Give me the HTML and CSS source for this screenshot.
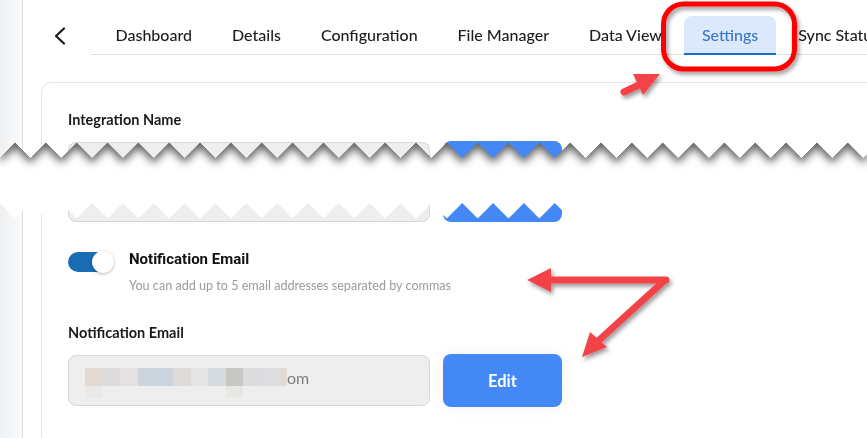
FILE: index.html
```html
<!DOCTYPE html>
<html lang="en">
<head>
<meta charset="utf-8">
<title>Settings</title>
<link rel="stylesheet" href="styles.css">
</head>
<body>
<div class="page">
  <div class="torn-top">
    <div class="piece piece-top">
      <aside class="side"></aside>
      <main class="main">
        <header class="header">
          <span class="back">
            <svg width="12" height="18" viewBox="0 0 12 18"><path d="M10 1.5 L2 9 L10 16.5" fill="none" stroke="#1a1a1a" stroke-width="2.2" stroke-linecap="round" stroke-linejoin="round"/></svg>
          </span>
          <nav class="tabs">
            <span class="tab">Dashboard</span>
            <span class="tab">Details</span>
            <span class="tab">Configuration</span>
            <span class="tab">File Manager</span>
            <span class="tab">Data View</span>
            <span class="tab active">Settings</span>
            <span class="tab">Sync Status</span>
          </nav>
        </header>
        <section class="card card-top">
          <div class="label">Integration Name</div>
          <div class="row">
            <div class="field field-top"></div>
            <div class="btn btn-top"></div>
          </div>
        </section>
      </main>
    </div>
  </div>

  <div class="piece piece-bottom">
    <aside class="side"></aside>
    <main class="main">
      <section class="card card-bottom">
        <div class="row row-tail">
          <div class="field field-tail"></div>
          <div class="btn btn-tail"></div>
        </div>
        <div class="switch-row">
          <span class="switch"></span>
          <div class="switch-text">
            <div class="switch-title">Notification Email</div>
            <div class="switch-sub">You can add up to 5 email addresses separated by commas</div>
          </div>
        </div>
        <div class="label label-email">Notification Email</div>
        <div class="row row-email">
          <div class="field email">
            <div class="mosaic">
              <i class="m1"></i><i class="m2"></i><i class="m3"></i><i class="m4"></i><i class="m5"></i><i class="m6"></i><i class="m7"></i><i class="m8"></i><i class="m9"></i><i class="m10"></i><i class="m11"></i>
              <i class="n1"></i><i class="gapA"></i><i class="n2"></i>
            </div>
            <span class="email-end">om</span>
          </div>
          <button class="btn edit">Edit</button>
        </div>
      </section>
    </main>
  </div>

  <svg class="annot" width="867" height="438" viewBox="0 0 867 438">
    <defs>
      <filter id="sh" x="-30%" y="-30%" width="160%" height="160%">
        <feDropShadow dx="2" dy="3" stdDeviation="2" flood-color="#000" flood-opacity="0.4"/>
      </filter>
    </defs>
    <g filter="url(#sh)">
      <rect x="663.5" y="4" width="131" height="65" rx="20" fill="none" stroke="#ff0000" stroke-width="5"/>
    </g>
    <g filter="url(#sh)" fill="#f4434a" stroke="#f4434a">
      <line x1="624" y1="92" x2="641" y2="84" stroke-width="7" stroke-linecap="round"/>
      <polygon points="660,74 633,74 643,95" stroke="none"/>
      <line x1="666" y1="280" x2="548" y2="280" stroke-width="7" stroke-linecap="round"/>
      <polygon points="527,280 551,268 551,292" stroke="none"/>
      <line x1="664" y1="281" x2="597" y2="342" stroke-width="7" stroke-linecap="round"/>
      <polygon points="582,357 590,332 607,347" stroke="none"/>
    </g>
  </svg>
</div>
</body>
</html>
```

FILE: styles.css
```css
* { box-sizing: border-box; }

html, body {
  margin: 0;
  background: #ffffff;
}

body {
  width: 867px;
  height: 438px;
  overflow: hidden;
  font-family: Lato, "Noto Sans", sans-serif;
  color: #1c1c1e;
}

.page {
  position: relative;
  width: 867px;
  height: 438px;
}

/* torn paper pieces */
.torn-top {
  filter: drop-shadow(0 5px 4px rgba(0, 0, 0, 0.62));
}

.piece {
  display: flex;
  background: #ffffff;
  overflow: hidden;
}

.piece-top {
  height: 158px;
  -webkit-mask:
    linear-gradient(#000 0 0) 0 0 / 100% calc(100% - 15px) no-repeat,
    conic-gradient(from -45.8deg at 50% 100%, #000 91.6deg, #0000 0) 15px 100% / 30.85px 15px repeat-x;
  mask:
    linear-gradient(#000 0 0) 0 0 / 100% calc(100% - 15px) no-repeat,
    conic-gradient(from -45.8deg at 50% 100%, #000 91.6deg, #0000 0) 15px 100% / 30.85px 15px repeat-x;
}

.piece-bottom {
  height: 235px;
  margin-top: 45px;
  -webkit-mask:
    conic-gradient(from 134.2deg at 50% 0, #000 91.6deg, #0000 0) 15px 0 / 30.85px 15px repeat-x,
    linear-gradient(#000 0 0) 0 100% / 100% calc(100% - 15px) no-repeat;
  mask:
    conic-gradient(from 134.2deg at 50% 0, #000 91.6deg, #0000 0) 15px 0 / 30.85px 15px repeat-x,
    linear-gradient(#000 0 0) 0 100% / 100% calc(100% - 15px) no-repeat;
}

.side {
  width: 23px;
  flex: none;
  background: linear-gradient(90deg, #eef0f2, #fafbfb);
  border-right: 1px solid #d9dde3;
}

.main {
  flex: 1;
  min-width: 0;
  padding-left: 18px;
}

/* header / tabs */
.header {
  display: flex;
  align-items: flex-end;
  height: 55px;
  padding-left: 13px;
}

.back {
  flex: none;
  width: 12px;
  height: 39px;
  display: flex;
  align-items: center;
}

.tabs {
  flex: 1;
  display: flex;
  align-items: flex-end;
  gap: 5px;
  height: 55px;
  margin-left: 25px;
  padding-left: 7px;
  border-bottom: 1px solid #dde0e6;
  white-space: nowrap;
}

.tab {
  flex: none;
  height: 39px;
  margin-bottom: -1px;
  padding: 0 17.5px;
  display: flex;
  align-items: center;
  font-size: 16px;
  font-weight: 500;
  color: #1d1d20;
  border-bottom: 2px solid transparent;
  border-radius: 8px 8px 0 0;
}

.tab.active {
  background: #dce8fb;
  color: #3a77c4;
  border-bottom-color: #1b6fc3;
}

/* card */
.card {
  border: 1px solid #e1e3e8;
  border-right: none;
  margin-right: -40px;
  padding-left: 26px;
}

.card-top {
  margin-top: 27px;
  padding-top: 27px;
  height: 200px;
  border-bottom: none;
  border-radius: 10px 0 0 0;
}

.card-bottom {
  height: 100%;
  border-top: none;
  border-bottom: none;
}

.label {
  font-size: 14.5px;
  font-weight: 700;
  line-height: 20px;
  color: #1a1a1c;
}

.row {
  display: flex;
  align-items: flex-start;
  gap: 13px;
  margin-top: 11px;
}

.field {
  width: 362px;
  flex: none;
  background: #eeeeee;
  border: 1px solid #d8d8d8;
  border-radius: 8px;
}

.btn {
  width: 119px;
  flex: none;
  background: #4388f4;
  border: none;
  border-radius: 8px;
}

.field-top {
  height: 60px;
  margin-top: 1px;
  border-bottom: none;
  border-radius: 8px 8px 0 0;
}

.btn-top {
  height: 60px;
  border-radius: 8px 8px 0 0;
}

.row-tail {
  margin-top: 0;
  height: 19px;
}

.field-tail {
  height: 19px;
  border-top: none;
  border-radius: 0 0 8px 8px;
}

.btn-tail {
  height: 19px;
  border-radius: 0 0 8px 8px;
}

/* switch */
.switch-row {
  display: flex;
  align-items: flex-start;
  gap: 16px;
  margin-top: 27px;
}

.switch {
  position: relative;
  flex: none;
  width: 45px;
  height: 20px;
  margin-top: 3px;
  border-radius: 10px;
  background: #1a6db5;
}

.switch::after {
  content: "";
  position: absolute;
  right: -1px;
  top: -1px;
  width: 22px;
  height: 22px;
  border-radius: 50%;
  background: #ffffff;
  box-shadow: 0 1px 3px rgba(0, 0, 0, 0.3);
}

.switch-title {
  font-family: Roboto, "Noto Sans", sans-serif;
  font-weight: 700;
  font-size: 15px;
  line-height: 20px;
  color: #111114;
}

.switch-sub {
  margin-top: 8px;
  font-size: 12.6px;
  line-height: 18px;
  color: #9b9b9b;
}

.label-email {
  margin-top: 28px;
}

/* email field */
.email {
  height: 51px;
  margin-top: 1px;
  display: flex;
  align-items: flex-start;
  padding: 12px 0 0 16px;
}

.mosaic {
  display: grid;
  grid-template-columns: 17px 18px 18px 35px 18px 17px 18px 17px 17px 19px 8px;
  grid-template-rows: 18px 12px;
}

.mosaic i { display: block; }
.m1 { background: #e3d9d1; }
.m2 { background: #dcdcdc; }
.m3 { background: #e6e2e2; }
.m4 { background: #ccd5de; }
.m5 { background: #dedada; }
.m6 { background: #e5e5e5; }
.m7 { background: #d6dbe0; }
.m8 { background: #c8c7c3; }
.m9 { background: #dcdcde; }
.m10 { background: #dcdde0; }
.m11 { background: #e3dbd3; }
.n1 { background: #ebe9e7; }
.gapA { grid-column: span 6; }
.n2 { background: #e9e7e4; }

.email-end {
  margin-top: 1px;
  font-size: 16px;
  line-height: 18px;
  color: #7d7d7d;
}

.edit {
  height: 53px;
  color: #ffffff;
  font-family: Lato, "Noto Sans", sans-serif;
  font-size: 16.5px;
  font-weight: 700;
  box-shadow: 0 0 18px rgba(0, 0, 0, 0.06);
}

/* annotation overlay */
.annot {
  position: absolute;
  left: 0;
  top: 0;
  pointer-events: none;
}
```
